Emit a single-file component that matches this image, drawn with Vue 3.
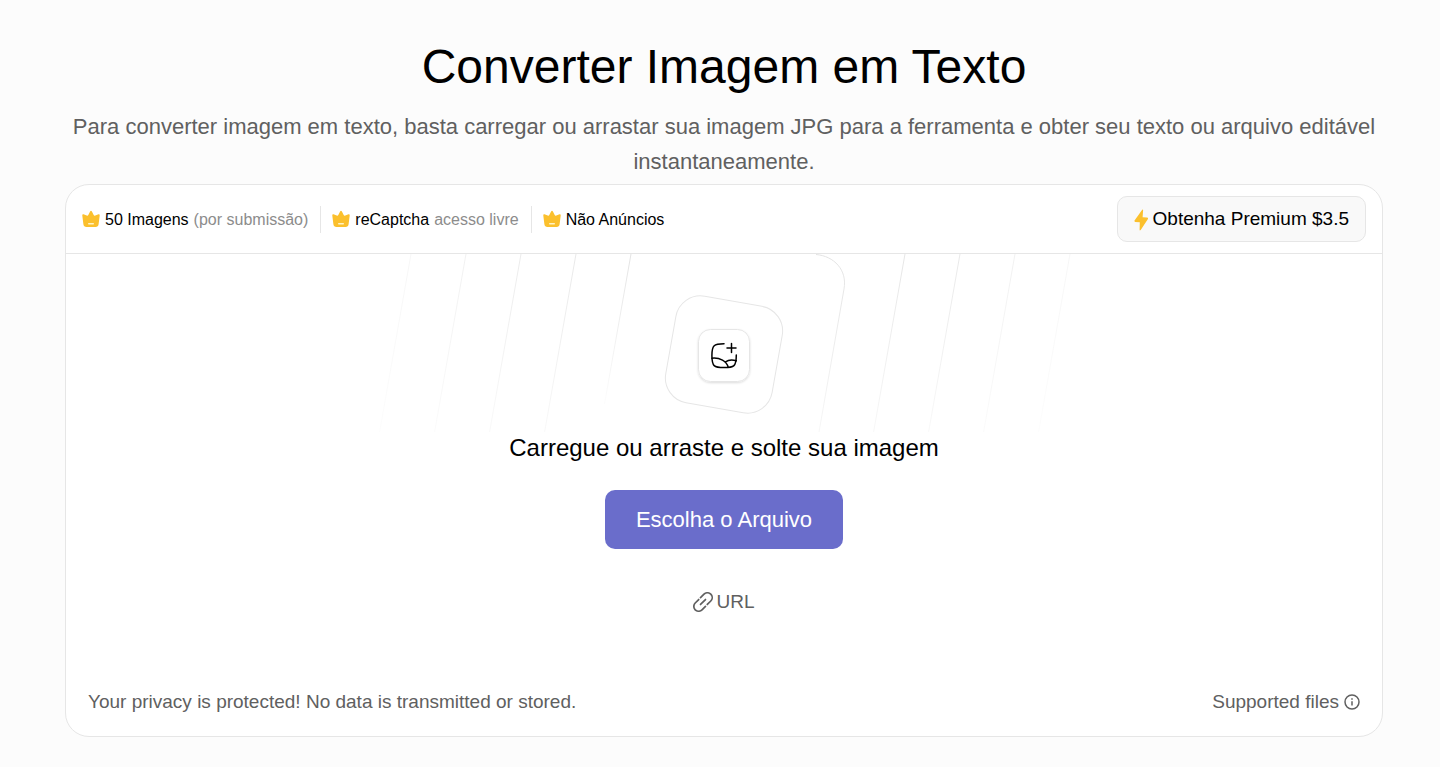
<template>
  <main class="converter">
    <!-- Heading -->
    <h1 class="converter-title">Converter Imagem em Texto</h1>
    <p class="converter-text">
      Para converter imagem em texto, basta carregar ou arrastar sua imagem JPG para a ferramenta e obter seu texto ou arquivo editável instantaneamente.
    </p>

    <section class="tool-card">
      <!-- Premium bar -->
      <header class="tool-bar">
        <ul class="perk-list">
          <li v-for="perk in perks" :key="perk.title" class="perk">
            <svg class="perk-icon" viewBox="0 0 18 18" aria-hidden="true">
              <path d="M9 .8Q9.500 .8 9.900 1.600L11.700 5Q12.300 6.100 13.300 5.500L16.500 4.300Q17.900 4 17.700 5.600L16.600 14.300Q16.200 17 13.600 17H4.400Q1.800 17 1.400 14.300L.3 5.600Q.1 4 1.500 4.300L4.700 5.500Q5.700 6.100 6.300 5L8.100 1.600Q8.500 .8 9 .8Z" fill="#fbc02d" />
              <path d="M6.700 13.800H11.300" stroke="#fff3c4" stroke-width="1.4" stroke-linecap="round" />
            </svg>
            <span>{{ perk.title }}</span>
            <span v-if="perk.note" class="perk-note">{{ perk.note }}</span>
          </li>
        </ul>
        <a class="premium-button" href="#">
          <svg class="premium-icon" viewBox="0 0 16 24" aria-hidden="true">
            <path d="M8.200 2.800Q9.200 2.100 9.100 3.500L8.600 10.300L13 10.600Q14.600 10.900 13.800 12.300L6.700 23Q5.600 24.200 5.600 22.500L5.800 15.300L1.300 14.900Q-.2 14.600 .7 13.200Z" fill="#fbc02d" />
          </svg>
          <span>Obtenha Premium $3.5</span>
        </a>
      </header>

      <!-- Drop area -->
      <div class="drop-area">
        <svg class="drop-art" viewBox="0 0 700 178" fill="none" aria-hidden="true">
          <defs>
            <linearGradient id="fade" x1="0" y1="0" x2="0" y2="178" gradientUnits="userSpaceOnUse">
              <stop offset="0" stop-color="#e3e3e3" />
              <stop offset="1" stop-color="#e3e3e3" stop-opacity="0.3" />
            </linearGradient>
            <linearGradient id="fade-short" x1="0" y1="0" x2="0" y2="150" gradientUnits="userSpaceOnUse">
              <stop offset="0" stop-color="#e3e3e3" />
              <stop offset="1" stop-color="#e3e3e3" stop-opacity="0.1" />
            </linearGradient>
            <filter id="tile-shadow" x="-20%" y="-20%" width="140%" height="150%">
              <feDropShadow dx="0" dy="1" stdDeviation="1.2" flood-color="#000" flood-opacity="0.14" />
            </filter>
          </defs>
          <path
            v-for="line in lines"
            :key="line.x"
            :d="`M${line.x} 0l-31.4 178`"
            stroke="url(#fade)"
            :stroke-opacity="line.opacity"
          />
          <path d="M257 0l-26.500 150" stroke="url(#fade-short)" />
          <path d="M442 .5C460 2 473.500 16 470 35L445 178" stroke="url(#fade)" />
          <rect x="296" y="46.500" width="108" height="108" rx="25" transform="rotate(10 350 100.500)" stroke="#e6e6e6" />
          <rect x="324.500" y="75.500" width="51" height="52" rx="12" fill="#fff" stroke="#e6e6e6" filter="url(#tile-shadow)" />
          <g stroke="#000" stroke-width="1.5" stroke-linecap="round">
            <path d="M350 89.700C340 89.700 337.900 91 337.900 101.600C337.900 112.300 340 113.600 350 113.600C360 113.600 362.300 112.500 362.300 101" />
            <path d="M338 104.200C346 103.500 352.500 107 354.200 113.200M351.500 107.800C354 106 358.500 105.500 362.300 106.700" />
            <path d="M357.500 89.500V98.500M353 94H362" />
          </g>
        </svg>
        <p class="drop-title">Carregue ou arraste e solte sua imagem</p>
        <button class="file-button" type="button">Escolha o Arquivo</button>
        <button class="url-button" type="button">
          <svg class="url-icon" viewBox="0 0 20 20" fill="none" stroke="#606060" stroke-width="1.7" stroke-linecap="round" aria-hidden="true">
            <g transform="rotate(-45 10 10)">
              <path d="M11.300 5.200H16.200A4.800 4.800 0 0 1 16.200 14.800H11.300" />
              <path d="M8.700 5.200H3.800A4.800 4.800 0 0 0 3.800 14.800H8.700" />
              <path d="M6.500 10H13.500" />
            </g>
          </svg>
          <span>URL</span>
        </button>
      </div>

      <!-- Footer -->
      <footer class="tool-footer">
        <span>Your privacy is protected! No data is transmitted or stored.</span>
        <span class="supported">
          Supported files
          <svg class="info-icon" viewBox="0 0 16 16" fill="none" stroke="#606060" stroke-width="1.5" aria-hidden="true">
            <circle cx="8" cy="8" r="7" />
            <path d="M8 7.200V11.500M8 4.200V5.700" />
          </svg>
        </span>
      </footer>
    </section>
  </main>
</template>

<script setup>
const perks = [
  { title: '50 Imagens', note: '(por submissão)' },
  { title: 'reCaptcha', note: 'acesso livre' },
  { title: 'Não Anúncios' }
]

const lines = [
  { x: 37, opacity: 0.3 },
  { x: 92, opacity: 0.5 },
  { x: 147, opacity: 0.7 },
  { x: 202, opacity: 0.8 },
  { x: 531, opacity: 0.9 },
  { x: 586, opacity: 0.8 },
  { x: 641, opacity: 0.5 },
  { x: 696, opacity: 0.3 }
]
</script>

<style>
body {
  background: #fcfcfc;
}
</style>

<style scoped>
.converter {
  padding: 36px 57px 30px 65px;
  font-family: "Liberation Sans", Arial, sans-serif;
  color: #000;
}

.converter-title {
  margin: 0 0 12px;
  font-size: 48px;
  font-weight: 400;
  line-height: 61px;
  text-align: center;
}

.converter-text {
  margin: 0 0 5px;
  font-size: 22px;
  line-height: 35px;
  text-align: center;
  color: #606060;
}

.tool-card {
  background: #fff;
  border: 1px solid #e6e6e6;
  border-radius: 24px;
}

.tool-bar {
  display: flex;
  align-items: center;
  justify-content: space-between;
  padding: 11px 16px;
  border-bottom: 1px solid #e6e6e6;
}

.perk-list {
  display: flex;
  margin: 0;
  padding: 0;
  list-style: none;
  font-size: 16px;
  line-height: 27px;
}

.perk {
  display: flex;
  align-items: center;
  gap: 5px;
  padding: 0 12px 0 11px;
  border-left: 1px solid #e6e6e6;
}

.perk:first-child {
  padding-left: 0;
  border-left: 0;
}

.perk-icon {
  width: 18px;
  height: 18px;
}

.perk-note {
  color: #8c8c8c;
}

.premium-button {
  display: flex;
  align-items: center;
  gap: 3px;
  padding: 10px 16px;
  border: 1px solid #e6e6e6;
  border-radius: 10px;
  background: #f9f9f9;
  font-size: 19px;
  line-height: 24px;
  color: #000;
  text-decoration: none;
}

.premium-icon {
  width: 16px;
  height: 24px;
}

.drop-area {
  display: flex;
  flex-direction: column;
  align-items: center;
}

.drop-art {
  width: 700px;
  max-width: 100%;
}

.drop-title {
  margin: 0 0 26px;
  font-size: 24px;
  line-height: 32px;
}

.file-button {
  margin-bottom: 40px;
  padding: 12px 31px;
  border: 0;
  border-radius: 10px;
  background: #6a6dcb;
  font-family: inherit;
  font-size: 22px;
  line-height: 35px;
  color: #fff;
  cursor: pointer;
}

.url-button {
  display: flex;
  align-items: center;
  gap: 3px;
  padding: 0;
  border: 0;
  background: none;
  font-family: inherit;
  font-size: 19px;
  line-height: 26px;
  color: #606060;
  cursor: pointer;
}

.url-icon {
  width: 20px;
  height: 20px;
}

.tool-footer {
  display: flex;
  justify-content: space-between;
  padding: 74px 22px 21px;
  font-size: 19px;
  line-height: 26px;
  color: #606060;
}

.supported {
  display: flex;
  align-items: center;
  gap: 5px;
}

.info-icon {
  width: 16px;
  height: 16px;
}
</style>
